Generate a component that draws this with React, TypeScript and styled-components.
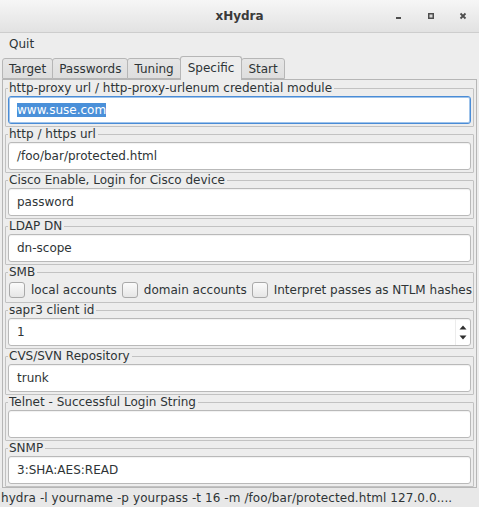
import React from "react";
import styled, { createGlobalStyle } from "styled-components";

const Global = createGlobalStyle`
  html, body { margin: 0; padding: 0; background: #ededed; }
  body {
    font-family: "DejaVu Sans", "Liberation Sans", sans-serif;
    font-size: 12px;
    color: #2e3436;
  }
  * { box-sizing: border-box; }
`;

const Window = styled.div`
  width: 479px;
  height: 507px;
  display: flex;
  flex-direction: column;
  background: #ededed;
  overflow: hidden;
`;

const TitleBar = styled.div`
  height: 33px;
  flex: none;
  display: grid;
  grid-template-columns: 1fr auto 1fr;
  align-items: center;
  background: linear-gradient(#f6f6f6, #e2e2e2);
  border-bottom: 1px solid #cdcdcd;
`;

const Title = styled.div`
  grid-column: 2;
  font-weight: bold;
  font-size: 12px;
  color: #3a3a3a;
  padding-bottom: 1px;
`;

const Controls = styled.div`
  grid-column: 3;
  display: flex;
  justify-content: flex-end;
`;

const ControlButton = styled.div`
  width: 32px;
  height: 32px;
  display: flex;
  align-items: center;
  justify-content: center;
  color: #4e4e4e;
`;

const MenuBar = styled.div`
  height: 22px;
  flex: none;
  display: flex;
  align-items: center;
  padding-left: 9px;
  padding-bottom: 1px;
`;

const MenuItem = styled.span`
  color: #2e3436;
`;

const Notebook = styled.div`
  flex: 1;
  display: flex;
  flex-direction: column;
  padding: 0 2px;
  min-height: 0;
`;

const TabRow = styled.div`
  height: 24px;
  flex: none;
  display: flex;
  align-items: flex-end;
`;

const Tab = styled.div<{ $active?: boolean }>`
  position: relative;
  z-index: ${(p) => (p.$active ? 2 : 1)};
  height: ${(p) => (p.$active ? "24px" : "21px")};
  margin-bottom: ${(p) => (p.$active ? "-1px" : "0")};
  margin-right: -1px;
  padding: ${(p) => (p.$active ? "0 7px 2px" : "0 6px 0")};
  display: flex;
  align-items: center;
  border: 1px solid #b6b6b6;
  border-bottom: ${(p) => (p.$active ? "none" : "1px solid #b6b6b6")};
  border-radius: 3px 3px 0 0;
  background: ${(p) => (p.$active ? "#ededed" : "linear-gradient(#e6e6e6, #dedede)")};
  color: #2e3436;
  white-space: nowrap;
`;

const Page = styled.div`
  flex: 1;
  display: flex;
  flex-direction: column;
  border: 1px solid #b6b6b6;
  padding: 1px 2px 0;
  background: #ededed;
  min-height: 0;
`;

const Group = styled.fieldset`
  margin: 0;
  padding: 1px 2px 2px;
  border: 1px solid #c2c2c2;
  border-radius: 1px;
  min-width: 0;
`;

const Legend = styled.legend`
  padding: 0 2px 0 1px;
  margin-left: 0;
  line-height: 14px;
  font-size: 12px;
  color: #2e3436;
  white-space: nowrap;
`;

const Field = styled.div<{ $focused?: boolean }>`
  height: 28px;
  width: 100%;
  display: flex;
  align-items: center;
  padding-left: 8px;
  background: #ffffff;
  border: 1px solid ${(p) => (p.$focused ? "#4a8cd6" : "#b9b9b9")};
  box-shadow: ${(p) =>
    p.$focused ? "inset 0 0 0 1px #9fc3ea" : "inset 0 1px 1px rgba(0,0,0,0.06)"};
  border-radius: 3px;
  color: #2e3436;
  white-space: nowrap;
  overflow: hidden;
`;

const Selected = styled.span`
  background: #4a90d9;
  color: #ffffff;
  line-height: 14px;
`;

const SpinField = styled(Field)`
  padding-right: 0;
`;

const SpinValue = styled.span`
  flex: 1;
`;

const SpinArrows = styled.div`
  width: 15px;
  height: 100%;
  display: flex;
  flex-direction: column;
  align-items: center;
  justify-content: space-around;
  border-left: 1px solid #ececec;
  padding: 3px 0;
`;

const CheckRow = styled.div`
  height: 20px;
  display: flex;
  align-items: center;
  white-space: nowrap;
`;

const CheckItem = styled.label`
  display: flex;
  align-items: center;
  gap: 6px;
  margin-left: 1px;
  margin-right: 4px;
  color: #2e3436;
`;

const CheckBox = styled.span`
  width: 16px;
  height: 16px;
  flex: none;
  border: 1px solid #a9a9a9;
  border-radius: 3px;
  background: linear-gradient(#fbfbfb, #e6e6e6);
`;

const StatusBar = styled.div`
  height: 19px;
  flex: none;
  display: flex;
  align-items: center;
  padding-left: 1px;
  background: #e8e8e8;
  color: #2e3436;
  white-space: nowrap;
  overflow: hidden;
  letter-spacing: 0.08px;
`;

const MinIcon = () => (
  <svg width="8" height="8" viewBox="0 0 8 8">
    <rect x="1" y="5" width="5" height="2" fill="currentColor" />
  </svg>
);

const MaxIcon = () => (
  <svg width="8" height="8" viewBox="0 0 8 8">
    <rect x="1" y="1" width="6" height="6" fill="#9a9a9a" />
    <rect x="1.75" y="1.75" width="4.5" height="4.5" fill="#d8d8d8" stroke="currentColor" strokeWidth="1.5" />
  </svg>
);

const CloseIcon = () => (
  <svg width="8" height="8" viewBox="0 0 8 8">
    <path d="M1.5 1.5 L6.5 6.5 M6.5 1.5 L1.5 6.5" stroke="currentColor" strokeWidth="1.8" />
  </svg>
);

const ArrowUp = () => (
  <svg width="8" height="5" viewBox="0 0 8 5">
    <path d="M0.5 4.5 L4 0.5 L7.5 4.5 Z" fill="#2e2e2e" />
  </svg>
);

const ArrowDown = () => (
  <svg width="8" height="5" viewBox="0 0 8 5">
    <path d="M0.5 0.5 L4 4.5 L7.5 0.5 Z" fill="#2e2e2e" />
  </svg>
);

const tabs = ["Target", "Passwords", "Tuning", "Specific", "Start"];

const textGroups: { label: string; value: string }[] = [
  { label: "http / https url", value: "/foo/bar/protected.html" },
  { label: "Cisco Enable, Login for Cisco device", value: "password" },
  { label: "LDAP DN", value: "dn-scope" },
];

const lowerGroups: { label: string; value: string }[] = [
  { label: "CVS/SVN Repository", value: "trunk" },
  { label: "Telnet - Successful Login String", value: "" },
  { label: "SNMP", value: "3:SHA:AES:READ" },
];

const smbOptions = ["local accounts", "domain accounts", "Interpret passes as NTLM hashes"];

export default function App() {
  return (
    <>
      <Global />
      <Window>
        <TitleBar>
          <Title>xHydra</Title>
          <Controls>
            <ControlButton><MinIcon /></ControlButton>
            <ControlButton><MaxIcon /></ControlButton>
            <ControlButton><CloseIcon /></ControlButton>
          </Controls>
        </TitleBar>
        <MenuBar>
          <MenuItem>Quit</MenuItem>
        </MenuBar>
        <Notebook>
          <TabRow>
            {tabs.map((t) => (
              <Tab key={t} $active={t === "Specific"}>{t}</Tab>
            ))}
          </TabRow>
          <Page>
            <Group>
              <Legend>http-proxy url / http-proxy-urlenum credential module</Legend>
              <Field $focused>
                <Selected>www.suse.com</Selected>
              </Field>
            </Group>
            {textGroups.map((g) => (
              <Group key={g.label}>
                <Legend>{g.label}</Legend>
                <Field>{g.value}</Field>
              </Group>
            ))}
            <Group>
              <Legend>SMB</Legend>
              <CheckRow>
                {smbOptions.map((o) => (
                  <CheckItem key={o}>
                    <CheckBox />
                    {o}
                  </CheckItem>
                ))}
              </CheckRow>
            </Group>
            <Group>
              <Legend>sapr3 client id</Legend>
              <SpinField>
                <SpinValue>1</SpinValue>
                <SpinArrows>
                  <ArrowUp />
                  <ArrowDown />
                </SpinArrows>
              </SpinField>
            </Group>
            {lowerGroups.map((g) => (
              <Group key={g.label}>
                <Legend>{g.label}</Legend>
                <Field>{g.value}</Field>
              </Group>
            ))}
          </Page>
        </Notebook>
        <StatusBar>hydra -l yourname -p yourpass -t 16 -m /foo/bar/protected.html 127.0.0....</StatusBar>
      </Window>
    </>
  );
}
